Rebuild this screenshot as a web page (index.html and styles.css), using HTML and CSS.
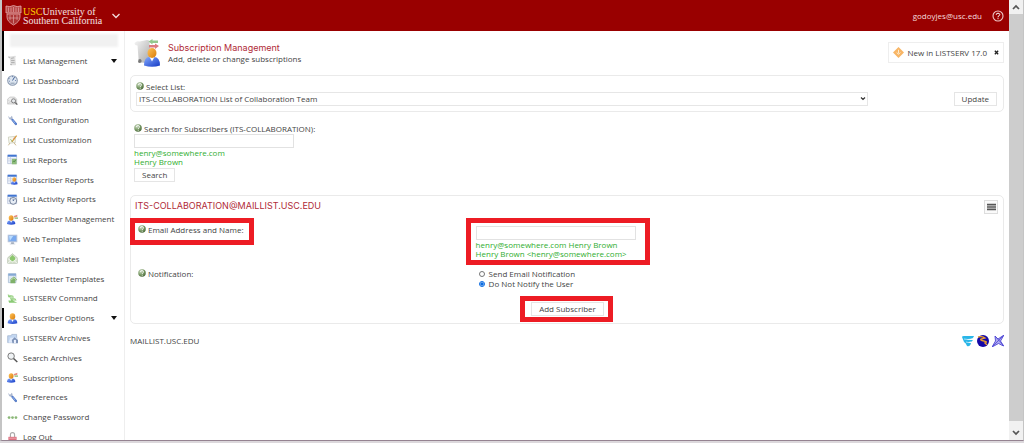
FILE: index.html
```html
<!DOCTYPE html>
<html lang="en">
<head>
<meta charset="utf-8">
<title>Subscription Management</title>
<link rel="stylesheet" href="styles.css">
</head>
<body>
<svg class="defs" aria-hidden="true">
  <defs>
    <linearGradient id="person-skin" x1="0" y1="0" x2="1" y2="1"><stop offset="0" stop-color="#ffc45c"/><stop offset="1" stop-color="#d97b08"/></linearGradient>
    <linearGradient id="person-shirt" x1="0" y1="0" x2="1" y2="1"><stop offset="0" stop-color="#86acff"/><stop offset="1" stop-color="#1238c4"/></linearGradient>
    <radialGradient id="ball" cx=".35" cy=".3" r=".8"><stop offset="0" stop-color="#cfdcc6"/><stop offset=".5" stop-color="#7f9f6c"/><stop offset="1" stop-color="#3f5f2f"/></radialGradient>
    <linearGradient id="paper" x1="0" y1="0" x2="1" y2="1"><stop offset="0" stop-color="#f6f6f6"/><stop offset="1" stop-color="#a6a6a6"/></linearGradient>
  </defs>
  <symbol id="help" viewBox="0 0 16 16"><circle cx="8" cy="8" r="7.5" fill="url(#ball)"/><path d="M5 6q0-3 3-3t3 3q0 1-2 2.500V10M8.500 11.500v2" fill="none" stroke="#fff" stroke-width="1.600"/></symbol>
  <symbol id="person" viewBox="0 0 16 16"><path d="M1 15q0-6 5-6h4q5 0 5 6-7 2-14 0z" fill="url(#person-shirt)"/><path d="M6 9l2 4 2-4z" fill="#fff"/><ellipse cx="8" cy="5" rx="4" ry="4.600" fill="url(#person-skin)"/></symbol>
  <symbol id="scroll" viewBox="0 0 16 16"><path d="M2 3q1-2 3-1l7-1q2 1 0 3l1 9q1 2-1 2H6q-1 0-1-2L4 5Q2 5 2 3z" fill="#dedede"/><path d="M2 3q1-1 2 1M6 5l4-1M6 8h5M6 11h5M7 14q-2 1-2-1" fill="none" stroke="#9a9a9a"/></symbol>
  <symbol id="gauge" viewBox="0 0 16 16"><circle cx="8" cy="8" r="7" fill="#dce5f0" stroke="#8b9ab0" stroke-width="1.500"/><path d="M8 8l3-5M8 2v1M3 5l1 1M13 8h-1M3 9h1" stroke="#33538c" stroke-width="1.300"/><path d="M5 11h6v2H5z" fill="#a2afc2"/></symbol>
  <symbol id="moderate" viewBox="0 0 16 16"><path d="M1 6l3-3h7l3 3v7H1z" fill="#eee" stroke="#bbb"/><path d="M1 7l6 4M1 13l5-4" stroke="#ccc"/><circle cx="9.500" cy="8.500" r="3" fill="#e5e8eb" stroke="#777" stroke-width="1.300"/><path d="M12 11l3 3" stroke="#666" stroke-width="2"/></symbol>
  <symbol id="wrench" viewBox="0 0 16 16"><path d="M2 1l2 3 2-1 0-2q3 1 2 4l6 7q1 3-2 3l-6-8Q2 7 2 1z" fill="#abb7ce"/><path d="M8 7l5 6" stroke="#4a74c8" stroke-width="3" stroke-linecap="round"/><path d="M8 7l4 5" stroke="#b4d0ff"/></symbol>
  <symbol id="easel" viewBox="0 0 16 16"><path d="M2 3l10-1v9l-9 1z" fill="#f7f8ef" stroke="#c2c5b0"/><path d="M4 12l-2 3M10 11l3 4" stroke="#b69b62"/><path d="M14 1L7 10" stroke="#d79a38" stroke-width="1.800"/><path d="M5 6l3 4" stroke="#79aa66"/><path d="M9 5l2-1" stroke="#d77"/></symbol>
  <symbol id="sheet" viewBox="0 0 16 16"><path d="M1 2h13v12H1z" fill="#f2f5fc" stroke="#aab8d3"/><path d="M1 1h13v3H1z" fill="#4175d1"/><path d="M1 7h13M1 10h13M5 4v10" stroke="#bdcae2"/></symbol>
  <symbol id="report" viewBox="0 0 16 16"><use href="#sheet"/><path d="M7 7h7v8H7z" fill="#8ebc7b"/><path d="M8 12l2-2 1 1 2-3" fill="none" stroke="#3c793a"/></symbol>
  <symbol id="subreport" viewBox="0 0 16 16"><use href="#sheet"/><use href="#person" x="5" y="4" width="11" height="12"/></symbol>
  <symbol id="activity" viewBox="0 0 16 16"><use href="#sheet"/><circle cx="9" cy="10" r="5" fill="#e7edf5" stroke="#67758f" stroke-width="1.300"/><path d="M9 7v3l2-2" fill="none" stroke="#395481"/></symbol>
  <symbol id="submanage" viewBox="0 0 16 16"><use href="#person" x="-1" y="1" width="14" height="15"/><path d="M10 3l5-2v3l-5 1z" fill="#e68d80"/><path d="M11 5h5v2h-5z" fill="#8fbc7a"/></symbol>
  <symbol id="monitor" viewBox="0 0 16 16"><path d="M1 1h14v11H1z" fill="#b8c5db"/><path d="M2.500 2.500h11v8h-11z" fill="#79a9ee"/><path d="M3 3h6L4 10z" fill="#b9dcff"/><path d="M6 12h4v2h2v1H4v-1h2z" fill="#a4aebe"/></symbol>
  <symbol id="mail" viewBox="0 0 16 16"><path d="M1 7l7-6 7 6v8H1z" fill="#d8e2cf" stroke="#b0bda8"/><path d="M4 7l4-4 4 4-1 5H5z" fill="#8bc66d"/><path d="M1 8l7 5 7-5M1 15l5-4M15 15l-5-4" fill="none" stroke="#fff"/></symbol>
  <symbol id="news" viewBox="0 0 16 16"><path d="M2 1h11v13H2z" fill="#dce7f4" stroke="#9eb5ce"/><path d="M2 1h11v3H2z" fill="#86a9d5"/><path d="M5 15V9l5-4 5 5-3 1v4z" fill="#7fb169"/><path d="M6 10l4-3 3 3" stroke="#d7edca" fill="none"/></symbol>
  <symbol id="command" viewBox="0 0 16 16"><path d="M1 2l8 2 1 3-8-1zM4 7l8 1 2 3-8 0zM2 11l6 0 7 3H3z" fill="#8aca75"/><path d="M2 3l7 3M5 8l7 2" stroke="#cceabd"/></symbol>
  <symbol id="archive" viewBox="0 0 16 16"><path d="M1 4h5l1-2h7v12H1z" fill="#c2d6f1" stroke="#9cafca"/><path d="M2 14L5 7h11l-3 7z" fill="#e0eafb"/><path d="M7 10l4-4 5 4v5H8z" fill="#7d92b7"/><path d="M10 10h3v5h-3z" fill="#eef3ff"/></symbol>
  <symbol id="search" viewBox="0 0 16 16"><circle cx="6" cy="6" r="4.700" fill="#f0f3f5" stroke="#777" stroke-width="1.400"/><path d="M9.500 9.500l5.500 5" stroke="#555" stroke-width="2.200"/></symbol>
  <symbol id="password" viewBox="0 0 16 16"><circle cx="3" cy="8" r="2" fill="#8bb878"/><circle cx="8" cy="8" r="2" fill="#8bb878"/><circle cx="13" cy="8" r="2" fill="#8bb878"/></symbol>
  <symbol id="lock" viewBox="0 0 16 16"><path d="M5 8V4q0-3 3-3t3 3v4" fill="none" stroke="#aaa" stroke-width="1.700"/><path d="M2 7h12v8H2z" fill="#dc7180"/><path d="M3 9h10" stroke="#f5b8bd"/></symbol>
</svg>
<div class="app">
  <header class="topbar">
    <svg class="shield" viewBox="0 0 34 42"><path d="M2 2q8 3 15-1 7 4 15 1v14H2z" fill="#b84a4a" stroke="#e8b4b4" stroke-width="1.600"/><path d="M4 18h26v6q0 9-13 16Q4 33 4 24z" fill="#ad3636" stroke="#e8b4b4" stroke-width="1.600"/><path d="M7 5v9M12 5v9M17 4v10M22 5v9M27 5v9M10 20v10M17 20v17M24 20v10M7 26h20" stroke="#dfa2a2" stroke-width="1.400"/></svg>
    <div class="brand"><span class="usc">USC</span>University of<br>Southern California</div>
    <button class="icon-button" aria-label="Switch site"><svg class="chevron" viewBox="0 0 8 6"><path d="M0.500 1L4 4.500 7.500 1" fill="none" stroke="#f4dcdc" stroke-width="1.300"/></svg></button>
    <a class="account" href="#">godoyjes@usc.edu</a>
    <button class="icon-button" aria-label="Help"><svg class="help-ring" viewBox="0 0 12 12"><circle cx="6" cy="6" r="5" fill="none" stroke="#eec7c7" stroke-width="1.100"/><path d="M4.200 4.800q0-1.600 1.800-1.600t1.800 1.500q0 .8-1.800 1.800v.8M6 8.200v1" fill="none" stroke="#fff" stroke-width="1"/></svg></button>
  </header>
  <nav class="sidebar">
    <div class="profile"><span class="redacted"></span></div>
    <ul class="menu">
      <li><a class="open" href="#"><svg><use href="#scroll"/></svg>List Management<span class="caret"></span></a></li>
      <li><a href="#"><svg><use href="#gauge"/></svg>List Dashboard</a></li>
      <li><a href="#"><svg><use href="#moderate"/></svg>List Moderation</a></li>
      <li><a href="#"><svg><use href="#wrench"/></svg>List Configuration</a></li>
      <li><a href="#"><svg><use href="#easel"/></svg>List Customization</a></li>
      <li><a href="#"><svg><use href="#report"/></svg>List Reports</a></li>
      <li><a href="#"><svg><use href="#subreport"/></svg>Subscriber Reports</a></li>
      <li><a href="#"><svg><use href="#activity"/></svg>List Activity Reports</a></li>
      <li><a href="#"><svg><use href="#submanage"/></svg>Subscriber Management</a></li>
      <li><a href="#"><svg><use href="#monitor"/></svg>Web Templates</a></li>
      <li><a href="#"><svg><use href="#mail"/></svg>Mail Templates</a></li>
      <li><a href="#"><svg><use href="#news"/></svg>Newsletter Templates</a></li>
      <li><a href="#"><svg><use href="#command"/></svg>LISTSERV Command</a></li>
      <li><a class="open" href="#"><svg><use href="#person"/></svg>Subscriber Options<span class="caret"></span></a></li>
      <li><a href="#"><svg><use href="#archive"/></svg>LISTSERV Archives</a></li>
      <li><a href="#"><svg><use href="#search"/></svg>Search Archives</a></li>
      <li><a href="#"><svg><use href="#submanage"/></svg>Subscriptions</a></li>
      <li><a href="#"><svg><use href="#wrench"/></svg>Preferences</a></li>
      <li><a href="#"><svg><use href="#password"/></svg>Change Password</a></li>
      <li><a href="#"><svg><use href="#lock"/></svg>Log Out</a></li>
    </ul>
  </nav>
  <main class="content">
    <div class="page-head">
      <svg class="page-icon" viewBox="0 0 52 56"><path d="M1 8q4-5 10-3l15-3q7 0 5 7l3 33q0 7-6 6l-14-1q-5-1-5-8L7 13Q1 13 1 8z" fill="url(#paper)"/><path d="M9 41q5-3 6 2t-5 5q-3-2-1-7z" fill="#777"/><path d="M29 5l8-5v3h11v5H37v3z" fill="#94c98e"/><path d="M50 14l-8-5v3H30v5h12v3z" fill="#dc7b81"/><path d="M20 53q0-17 11-17h9q12 0 12 17-16 5-32 0z" fill="url(#person-shirt)"/><path d="M31 36l5 9 5-9z" fill="#fff"/><ellipse cx="36" cy="28" rx="9" ry="10" fill="url(#person-skin)"/></svg>
      <div><h1>Subscription Management</h1><p>Add, delete or change subscriptions</p></div>
      <div class="notice"><svg viewBox="0 0 12 12"><path d="M6 0l6 6-6 6-6-6z" fill="#f8b565"/><path d="M6 3v4M4 6l2 2 2-2" fill="none" stroke="#fff0d5"/></svg><a href="#">New in LISTSERV 17.0</a><button class="icon-button" aria-label="Dismiss"><svg class="close" viewBox="0 0 6 6"><path d="M1 1l4 4M5 1L1 5" stroke="#222" stroke-width="1.600"/></svg></button></div>
    </div>
    <form class="card select-card">
      <div class="select-field">
        <label class="label" for="list"><svg><use href="#help"/></svg>Select List:</label>
        <div class="select-wrap"><select id="list"><option>ITS-COLLABORATION List of Collaboration Team</option></select><svg viewBox="0 0 6 4"><path d="M1 .5l2 2 2-2" fill="none" stroke="#333" stroke-width="1.200"/></svg></div>
      </div>
      <button class="button" type="button">Update</button>
    </form>
    <form class="search">
      <label class="label" for="find"><svg><use href="#help"/></svg>Search for Subscribers (ITS-COLLABORATION):</label>
      <input class="text" id="find" type="text">
      <p class="hint">henry@somewhere.com<br>Henry Brown</p>
      <button class="button" type="button">Search</button>
    </form>
    <form class="card add-card">
      <div class="card-head"><h2>ITS-COLLABORATION@MAILLIST.USC.EDU</h2><button class="menu-button" type="button" aria-label="Menu"><svg viewBox="0 0 10 8"><path d="M0 1h10M0 3h10M0 5h10M0 7h10" stroke="#555" stroke-width="1.300"/></svg></button></div>
      <div class="row">
        <div><div class="marked marked-label"><label class="label" for="who"><svg><use href="#help"/></svg>Email Address and Name:</label></div></div>
        <div><div class="marked marked-field"><input class="text" id="who" type="text"><p class="hint">henry@somewhere.com Henry Brown<br>Henry Brown &lt;henry@somewhere.com&gt;</p></div></div>
      </div>
      <div class="row notify" role="radiogroup" aria-labelledby="notify-label">
        <span class="label" id="notify-label"><svg><use href="#help"/></svg>Notification:</span>
        <div class="options">
          <label><input type="radio" name="notify">Send Email Notification</label>
          <label><input type="radio" name="notify" checked>Do Not Notify the User</label>
        </div>
      </div>
      <div class="actions"><div class="marked"><button class="button" type="button">Add Subscriber</button></div></div>
    </form>
    <footer class="footer">
      <span>MAILLIST.USC.EDU</span>
      <svg viewBox="0 0 12 12"><path d="M0 2q0-1 2-1h10q-1 3-4 3H5q1 1 6 1-1 2-3 2H6q1 1 3 1-1 4-4 3-1-3-3-4z" fill="#29b6e8"/><path d="M2 4q4 1 8 0M4 7q2 1 5 0" fill="none" stroke="#fff" stroke-width=".6"/></svg>
      <svg viewBox="0 0 12 12"><circle cx="6" cy="6" r="6" fill="#1408a8"/><path d="M1 2q4-1 7 1L4 4q-1 1 1 1.500l4 1q1 1-1 1.500l2 2" fill="none" stroke="#e69a30" stroke-width="1.300"/></svg>
      <svg viewBox="0 0 12 12"><path d="M12 0L8.500 6l3 5-5-2.500L0 12l3.500-6L3 1l3 3z" fill="#aeaaf0" stroke="#4f47d4" stroke-width=".9"/><path d="M12 0L0 12M3 1l9 10" stroke="#4f47d4" stroke-width=".8"/></svg>
    </footer>
  </main>
  <div class="scrollbar" aria-hidden="true">
    <svg viewBox="0 0 8 6"><path d="M1 5l3-3 3 3" fill="none" stroke="#555" stroke-width="1.700"/></svg>
    <span class="thumb"></span>
    <svg viewBox="0 0 8 6"><path d="M1 1l3 3 3-3" fill="none" stroke="#555" stroke-width="1.700"/></svg>
  </div>
</div>
</body>
</html>
```
FILE: styles.css
```css
* { box-sizing: border-box; }
body {
  margin: 0;
  background: #dcd8dc;
  color: #444;
  font: 8px/10px "Open Sans", Inter, sans-serif;
}
h1, h2, p, ul { margin: 0; padding: 0; font-weight: 400; }
a { color: inherit; text-decoration: none; }
button, input, select { font: inherit; color: inherit; }
svg { display: block; flex: none; }
.defs { position: absolute; width: 0; height: 0; }

.app {
  display: grid;
  grid-template: 31px minmax(0, 1fr) / 123px minmax(0, 1fr) 14px;
  height: calc(100vh - 2px);
  overflow: hidden;
  background: #fff;
  border: solid #c4c4c4;
  border-width: 0 1px 1px 2px;
  border-bottom-color: #958391;
}
.topbar {
  grid-column: 1 / 3;
  display: flex;
  align-items: center;
  padding: 0 5px 0 3px;
  background: #990000;
  color: #fff;
}
.shield { width: 17px; height: 21px; margin-right: 1px; }
.brand { color: #f4e0e0; font: 10px/9px "Liberation Serif", serif; }
.usc { color: #ffcc00; }
.icon-button { padding: 0; border: 0; background: none; }
.chevron { width: 8px; height: 6px; margin-left: 10px; }
.account { margin-left: auto; margin-right: 10px; color: #f4dcdc; }
.help-ring { width: 12px; height: 12px; }

.sidebar {
  display: flex;
  flex-direction: column;
  overflow: hidden;
  border-right: 1px solid #eee;
}
.profile { height: 20px; padding: 3px 6px; border-left: 2px solid #000; }
.redacted { display: block; height: 13px; background: #f1f1f1; filter: blur(1px); }
.menu {
  flex: 1;
  display: grid;
  grid-auto-rows: 1fr;
  margin-bottom: -7px;
  list-style: none;
}
.menu a {
  display: flex;
  align-items: center;
  gap: 5px;
  height: 100%;
  padding: 0 7px 0 3px;
  border-left: 2px solid transparent;
  white-space: nowrap;
}
.menu a.open { border-color: #000; }
.menu svg { width: 11px; height: 11px; }
.caret {
  margin-left: auto;
  border: 3px solid transparent;
  border-top: 4px solid #111;
  border-bottom: 0;
}

.content { padding: 8px 5px 0; }
.page-head { display: flex; padding-left: 4px; }
.page-icon { width: 26px; height: 28px; margin-right: 8px; }
h1, h2 { color: #b02a37; font: 9px/12px Inter, sans-serif; }
h1 { padding-top: 3px; }
.notice {
  display: flex;
  align-items: center;
  gap: 4px;
  height: 21px;
  margin: 3px 0 0 auto;
  padding: 0 4px;
  border: 1px solid #eee;
}
.notice > svg { width: 11px; height: 11px; }
.close { width: 5px; height: 5px; margin-left: 3px; }

.card { border: 1px solid #eaeaea; border-radius: 5px; }
.label { display: flex; gap: 2px; line-height: 10px; }
.label svg { width: 8px; height: 8px; }
.button {
  height: 14px;
  padding: 0 7px;
  border: 1px solid #e5e5e5;
  background: #fff;
  line-height: 10px;
}
.text {
  display: block;
  width: 160px;
  height: 14px;
  padding: 0 3px;
  border: 1px solid #e2e2e2;
}
.hint { color: #2fae2f; line-height: 9px; }

.select-card {
  display: flex;
  align-items: flex-end;
  justify-content: space-between;
  margin-top: 8px;
  padding: 6px 6px 5px 5px;
}
.select-field { width: 85%; }
.select-wrap { display: grid; align-items: center; }
.select-wrap > * { grid-area: 1 / 1; }
.select-wrap svg { width: 6px; height: 4px; margin-right: 2px; justify-self: end; pointer-events: none; }
select {
  width: 100%;
  height: 14px;
  padding: 0 2px;
  appearance: none;
  border: 1px solid #e6e6e6;
  background: #fff;
}
.search { padding: 12px 4px 13px; }
.search .hint { margin-bottom: 2px; }

.add-card { padding: 4px 5px 6px 4px; }
.card-head { display: flex; justify-content: space-between; }
.menu-button {
  display: grid;
  place-items: center;
  width: 14px;
  height: 14px;
  padding: 0;
  border: 1px solid #ddd;
  background: #fafafa;
}
.menu-button svg { width: 9px; height: 8px; }
.row { display: grid; grid-template-columns: 7fr 11fr; margin-top: 9px; }
.marked { width: fit-content; outline: 5px solid #ed1c24; }
.marked-label { height: 17px; padding: 2px 5px 0 3px; }
.marked-field { padding: 3px 9px 2px 5px; }
.notify > .label { padding-left: 3px; }
.options { padding-left: 8px; }
.options label { display: flex; align-items: center; gap: 4px; }
.options input { width: 6px; height: 6px; margin: 0; accent-color: #0b6be0; }
.actions { display: flex; justify-content: center; margin-top: 12px; }
.actions .marked { padding: 1px 4px 1px 6px; }
.footer { display: flex; align-items: center; gap: 3px; margin-top: 11px; }
.footer span { margin-right: auto; }
.footer svg { width: 12px; height: 12px; }

.scrollbar {
  grid-area: 1 / 3 / 3 / 4;
  display: flex;
  flex-direction: column;
  align-items: center;
  gap: 4px;
  padding: 4px 0;
  background: #f1f1f1;
}
.scrollbar svg { width: 8px; height: 6px; }
.thumb { flex: 1; width: 100%; margin-bottom: 5px; background: #cdcdcd; }
```
